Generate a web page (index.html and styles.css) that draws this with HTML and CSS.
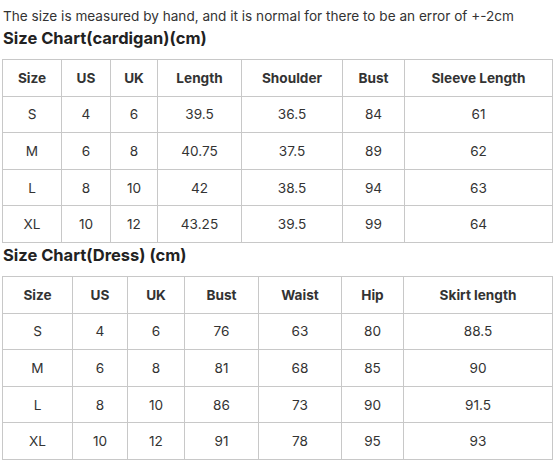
FILE: index.html
```html
<!DOCTYPE html>
<html>
<head>
<meta charset="utf-8">
<link rel="stylesheet" href="styles.css">
</head>
<body>
<div class="page">
  <p class="note">The size is measured by hand, and it is normal for there to be an error of +-2cm</p>
  <h2 class="title">Size Chart(cardigan)(cm)</h2>
  <table class="chart chart-a">
    <colgroup>
      <col class="a1"><col class="a2"><col class="a3"><col class="a4"><col class="a5"><col class="a6"><col class="a7">
    </colgroup>
    <tr><th>Size</th><th>US</th><th>UK</th><th>Length</th><th>Shoulder</th><th>Bust</th><th>Sleeve Length</th></tr>
    <tr><td>S</td><td>4</td><td>6</td><td>39.5</td><td>36.5</td><td>84</td><td>61</td></tr>
    <tr><td>M</td><td>6</td><td>8</td><td>40.75</td><td>37.5</td><td>89</td><td>62</td></tr>
    <tr><td>L</td><td>8</td><td>10</td><td>42</td><td>38.5</td><td>94</td><td>63</td></tr>
    <tr><td>XL</td><td>10</td><td>12</td><td>43.25</td><td>39.5</td><td>99</td><td>64</td></tr>
  </table>
  <h2 class="title title-b">Size Chart(Dress) (cm)</h2>
  <table class="chart chart-b">
    <colgroup>
      <col class="b1"><col class="b2"><col class="b3"><col class="b4"><col class="b5"><col class="b6"><col class="b7">
    </colgroup>
    <tr><th>Size</th><th>US</th><th>UK</th><th>Bust</th><th>Waist</th><th>Hip</th><th>Skirt length</th></tr>
    <tr><td>S</td><td>4</td><td>6</td><td>76</td><td>63</td><td>80</td><td>88.5</td></tr>
    <tr><td>M</td><td>6</td><td>8</td><td>81</td><td>68</td><td>85</td><td>90</td></tr>
    <tr><td>L</td><td>8</td><td>10</td><td>86</td><td>73</td><td>90</td><td>91.5</td></tr>
    <tr><td>XL</td><td>10</td><td>12</td><td>91</td><td>78</td><td>95</td><td>93</td></tr>
  </table>
</div>
</body>
</html>
```
FILE: styles.css
```css
html, body {
  margin: 0;
  padding: 0;
  background: #fff;
}
body {
  font-family: "Inter", sans-serif;
  color: #333;
}
.page {
  padding: 5px 2px 0 2px;
}
.note {
  margin: 0;
  font-size: 13.6px;
  line-height: 22px;
  padding-left: 1px;
}
.title {
  margin: 0;
  font-size: 16.5px;
  font-weight: 700;
  line-height: 22px;
  padding-left: 1px;
  color: #222;
}
.chart {
  margin-top: 10px;
  width: 551px;
  border-collapse: collapse;
  table-layout: fixed;
  font-size: 13.6px;
}
.chart th, .chart td {
  border: 1px solid #c8c8c8;
  text-align: center;
  padding: 0;
  height: 35.6px;
}
.chart th {
  font-weight: 700;
  color: #333;
}
.chart td {
  font-weight: 400;
  color: #333;
}
.title-b {
  margin-top: 1px;
}
.chart-b {
  margin-top: 10px;
}
.a1 { width: 59px; }
.a2 { width: 49px; }
.a3 { width: 47px; }
.a4 { width: 84px; }
.a5 { width: 101px; }
.a6 { width: 62px; }
.a7 { width: 148px; }
.b1 { width: 70px; }
.b2 { width: 55px; }
.b3 { width: 57px; }
.b4 { width: 74px; }
.b5 { width: 83px; }
.b6 { width: 62px; }
.b7 { width: 149px; }
```
